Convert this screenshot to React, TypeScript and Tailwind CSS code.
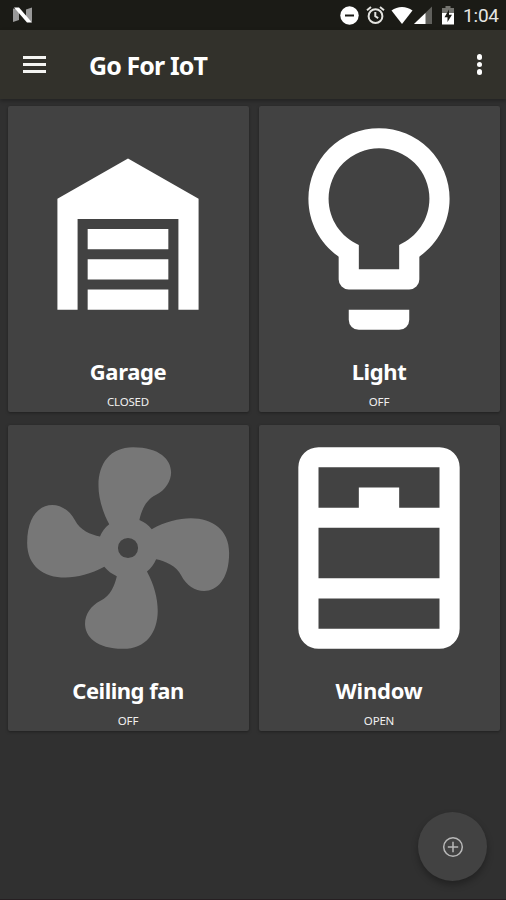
import React from "react";

const garage =
  "M19,20H17V11H7V20H5V9L12,5L19,9V20M8,12H16V14H8V12M8,15H16V17H8V15M16,18V20H8V18H16Z";
const bulb =
  "M12,2A7,7 0 0,1 19,9C19,11.38 17.81,13.47 16,14.74V17A1,1 0 0,1 15,18H9A1,1 0 0,1 8,17V14.74C6.19,13.47 5,11.38 5,9A7,7 0 0,1 12,2M9,21V20H15V21A1,1 0 0,1 14,22H10A1,1 0 0,1 9,21M12,4A5,5 0 0,0 7,9C7,11.05 8.23,12.81 10,13.58V16H14V13.58C15.77,12.81 17,11.05 17,9A5,5 0 0,0 12,4Z";
const fan =
  "M12,11A1,1 0 0,0 11,12A1,1 0 0,0 12,13A1,1 0 0,0 13,12A1,1 0 0,0 12,11M12.5,2C17,2 17.11,5.57 14.75,6.75C13.76,7.24 13.32,8.29 13.13,9.22C13.61,9.42 14.03,9.73 14.35,10.13C18.05,8.13 22.03,8.92 22.03,12.5C22.03,17 18.46,17.1 17.28,14.73C16.78,13.74 15.72,13.3 14.79,13.11C14.59,13.59 14.28,14 13.88,14.34C15.87,18.03 15.08,22 11.5,22C7,22 6.91,18.42 9.27,17.24C10.25,16.75 10.69,15.71 10.89,14.79C10.4,14.59 9.97,14.27 9.65,13.87C5.96,15.85 2,15.07 2,11.5C2,7 5.56,6.89 6.74,9.26C7.24,10.25 8.29,10.68 9.22,10.87C9.41,10.39 9.73,9.97 10.14,9.65C8.15,5.96 8.94,2 12.5,2Z";
const windowOpen =
  "M6,2H18A2,2 0 0,1 20,4V20A2,2 0 0,1 18,22H6A2,2 0 0,1 4,20V4A2,2 0 0,1 6,2M6,4V8H10V6H14V8H18V4H6M6,10V15H18V10H6M6,17V20H18V17H6Z";

type Device = {
  name: string;
  state: string;
  path: string;
  iconClass: string;
  nameClass: string;
};

const devices: Device[] = [
  { name: "Garage", state: "CLOSED", path: garage, iconClass: "fill-white", nameClass: "tracking-[-0.4px]" },
  { name: "Light", state: "OFF", path: bulb, iconClass: "fill-white", nameClass: "tracking-[-0.4px]" },
  { name: "Ceiling fan", state: "OFF", path: fan, iconClass: "fill-[#777777]", nameClass: "tracking-[-0.5px]" },
  { name: "Window", state: "OPEN", path: windowOpen, iconClass: "fill-white", nameClass: "tracking-[-0.2px]" },
];

function DeviceCard({ device }: { device: Device }) {
  return (
    <div className="flex h-[306px] flex-col items-center rounded-[2px] bg-[#424242] pt-[2px] pr-[1px] shadow-[0_1px_3px_rgba(0,0,0,0.35)]">
      <svg viewBox="0 0 24 24" className="h-[242px] w-[242px] shrink-0">
        <path fillRule="evenodd" d={device.path} className={device.iconClass} />
      </svg>
      <div className={`mt-[7.5px] text-[22px] leading-[28px] font-bold whitespace-nowrap text-white ${device.nameClass}`}>
        {device.name}
      </div>
      <div className="mt-[9px] text-[11.5px] leading-[16px] tracking-[-0.2px] text-[#f0f0f0]">{device.state}</div>
    </div>
  );
}

function StatusBar() {
  return (
    <div className="flex h-[30px] items-center justify-between bg-[#1b1b16] pr-[6px] pl-[12px]">
      <svg viewBox="0 0 22 18" className="mt-[2px] h-[18px] w-[22px]">
        <path d="M1 1.5L7 2.5V13L1 15Z" fill="#999" />
        <path d="M14 2.5L20 0.5V15L14 12Z" fill="#999" />
        <path d="M2 0.5H7L20 15.5H15Z" fill="#fff" />
      </svg>
      <div className="flex items-center">
        <svg viewBox="0 0 20 20" className="h-5 w-5">
          <circle cx="10.5" cy="10.5" r="9.2" fill="#fff" />
          <path d="M6 10.5H15" stroke="#1b1b16" strokeWidth="2" />
        </svg>
        <svg viewBox="0 0 20 20" className="ml-[6px] h-5 w-5" fill="none" stroke="#e4e4e0" strokeWidth="2">
          <circle cx="10.5" cy="11.2" r="6.9" />
          <path d="M10.3 7V11.3L13.2 13.2M2 5.2L6 2M19 5.2L15 2" />
        </svg>
        <svg viewBox="0 0 22 20" className="ml-[6px] h-5 w-[22px]">
          <path d="M0.5 5.5C6.5 0.8 15.5 0.8 21.5 5.5L11 19Z" fill="#fff" />
        </svg>
        <svg viewBox="0 0 18 20" className="ml-[1px] h-5 w-[18px]">
          <path d="M0 19L18 1.5V19Z" fill="#60605c" />
          <path d="M0 19L11.5 8V19Z" fill="#fff" />
        </svg>
        <svg viewBox="0 0 14 20" className="ml-[9px] h-5 w-[14px]">
          <path d="M4.5 1H9.5V3H13V8H1V3H4.5Z" fill="#74746f" />
          <path d="M1 8H13V19.5H1Z" fill="#fff" />
          <path d="M8 4.5L3.5 12.3H6.5V17L11 9.8H8Z" fill="#1b1b16" />
        </svg>
        <span className="mt-[2px] ml-[8px] w-[37px] font-['Roboto',sans-serif] text-[19px] leading-[30px] tracking-[-0.2px] whitespace-nowrap text-[#e6e6e3]">
          1:04
        </span>
      </div>
    </div>
  );
}

function AppBar() {
  return (
    <header className="flex h-[69px] items-center bg-[#32312b] pl-[23px] shadow-[0_2px_4px_rgba(0,0,0,0.3)]">
      <div className="flex w-[23px] flex-col gap-[4px]">
        <div className="h-[3px] bg-[#f4f4f2]" />
        <div className="h-[3px] bg-[#f4f4f2]" />
        <div className="h-[3px] bg-[#f4f4f2]" />
      </div>
      <h1 className="ml-[43px] text-[25px] leading-[32px] font-bold tracking-[-0.9px] whitespace-nowrap text-white">
        Go For IoT
      </h1>
      <div className="mr-[24px] ml-auto flex flex-col gap-[2px]">
        <div className="size-[5.5px] rounded-full bg-white" />
        <div className="size-[5.5px] rounded-full bg-white" />
        <div className="size-[5.5px] rounded-full bg-white" />
      </div>
    </header>
  );
}

export default function App() {
  return (
    <div className="flex h-[900px] w-[506px] flex-col overflow-hidden bg-[#303030] font-['Noto_Sans','Open_Sans',sans-serif]">
      <StatusBar />
      <AppBar />
      <main className="grid grid-cols-2 gap-x-[10px] gap-y-[13px] pt-[6.5px] pr-[6px] pl-[8px]">
        {devices.map((d) => (
          <DeviceCard key={d.name} device={d} />
        ))}
      </main>
      <button className="mt-auto mr-[19px] mb-[18px] flex size-[69px] items-center justify-center self-end rounded-full bg-[#424242] shadow-[0_4px_7px_rgba(0,0,0,0.3)]">
        <svg viewBox="0 0 22 22" className="size-[22px]" fill="none" stroke="#b8b8b8" strokeWidth="1.5">
          <circle cx="11" cy="11" r="9.3" />
          <path d="M11 5.8V16.2M5.8 11H16.2" />
        </svg>
      </button>
      <div className="h-px bg-[#261f22]" />
    </div>
  );
}
